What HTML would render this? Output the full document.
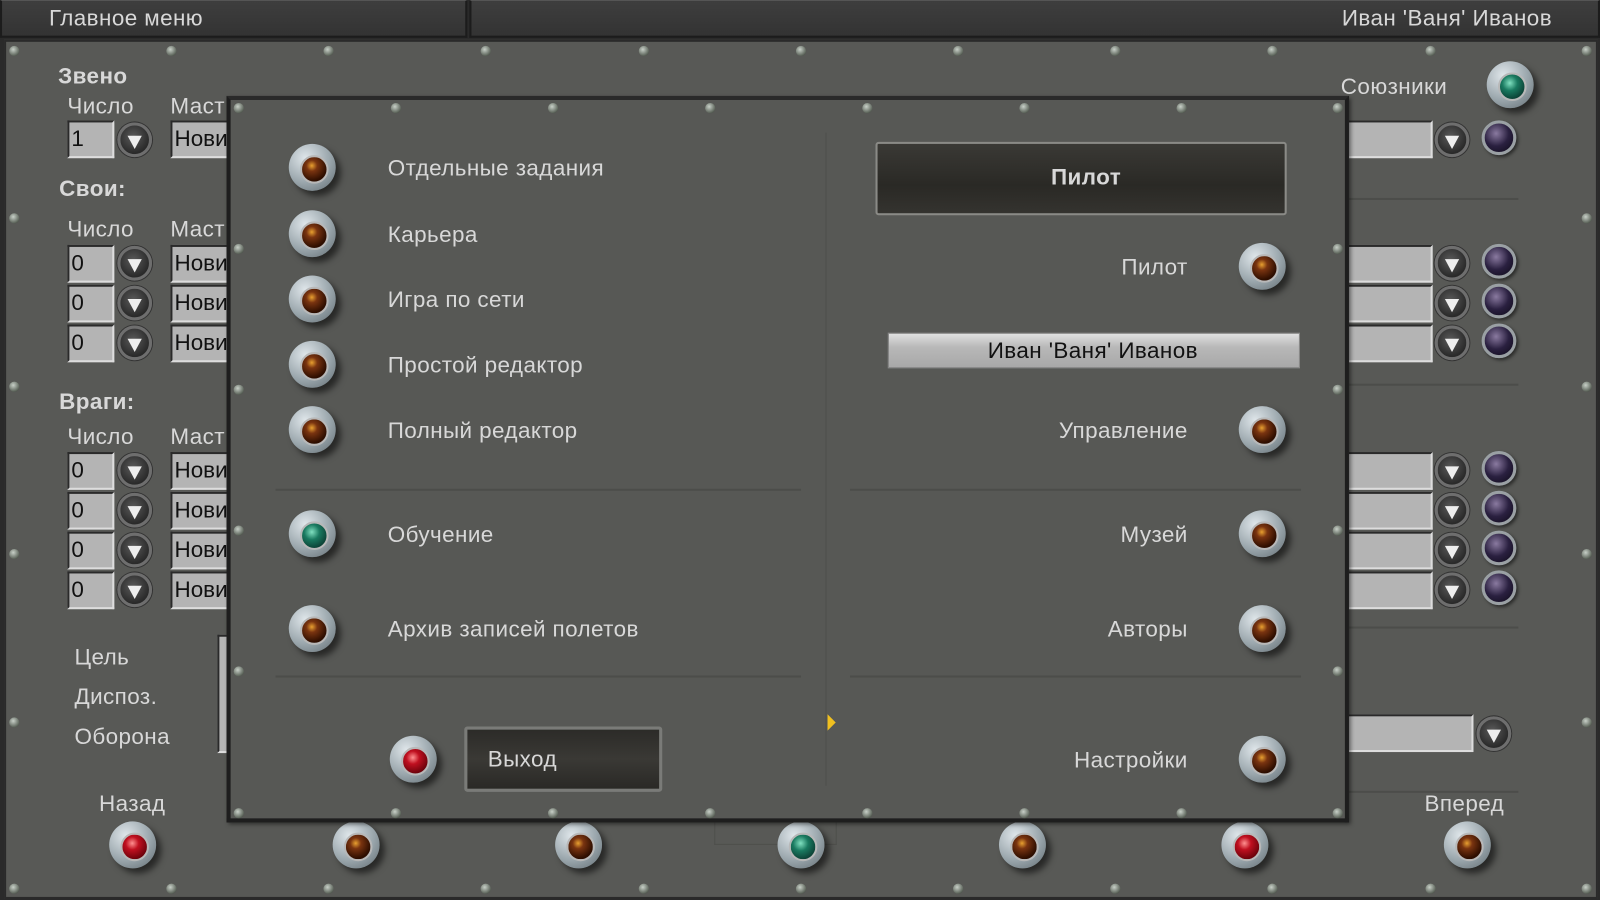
<!DOCTYPE html>
<html><head><meta charset="utf-8">
<style>
*{margin:0;padding:0;box-sizing:border-box}
html,body{width:1600px;height:900px;overflow:hidden;background:#2a2a2a}
#w{position:absolute;left:0;top:0;width:1568px;height:882px;transform:scale(1.0204);transform-origin:0 0;font-family:"Liberation Sans",sans-serif;}
.a{position:absolute}
.t{position:absolute;color:#d8d8d8;font-size:22px;letter-spacing:0.4px;white-space:nowrap;line-height:1}
.rt{position:absolute;right:404px;color:#d8d8d8;font-size:22px;letter-spacing:0.4px;white-space:nowrap;line-height:1}
.b{font-weight:bold}
.bar{position:absolute;top:0;height:37px;background:linear-gradient(#3e3e3e,#333);border:2px solid #1c1c1c;border-top:1px solid #555}
.inp{position:absolute;background:#b4b4b4;border:2px solid #2a2a2a;border-right-color:#ddd;border-bottom-color:#ddd;color:#111;font-size:22px;line-height:32px;padding-left:2px;overflow:hidden;height:37px}
.dd{position:absolute;width:34px;height:34px;border-radius:50%;background:radial-gradient(circle at 45% 40%,#5a5a5a,#2a2a2a 70%);border:3px solid #6e6e6e;box-shadow:0 0 0 1px #333}
.dd:after{content:"";position:absolute;left:7px;top:10px;border-left:7px solid transparent;border-right:7px solid transparent;border-top:13px solid #eee}
.k{position:absolute;width:46px;height:46px;margin:-23px 0 0 -23px;border-radius:50%;background:radial-gradient(circle at 35% 30%,#dfe6ea,#9aa6ac 55%,#5f6a70);box-shadow:5px 5px 6px rgba(0,0,0,.55)}
.k:after{content:"";position:absolute;left:11px;top:11px;width:24px;height:24px;border-radius:50%;border:2px solid #b8b8b8;background:radial-gradient(circle at 40% 35%,#e8a030 0,#7a3410 25%,#2e0e00 70%)}
.k.r:after{background:radial-gradient(circle at 40% 35%,#ff9090 0,#c01020 30%,#600008 80%)}
.k.g:after{background:radial-gradient(circle at 40% 35%,#80e0c0 0,#1a7a60 35%,#0a3a30 80%)}
.pk{position:absolute;width:34px;height:34px;margin:-17px 0 0 -17px;border-radius:50%;background:radial-gradient(circle at 40% 35%,#8a7aa0,#2a2040 50%,#0e0a18);border:3px solid #9aa0a4;box-shadow:2px 2px 3px rgba(0,0,0,.5)}
.s{position:absolute;width:10px;height:10px;margin:-5px 0 0 -5px;border-radius:50%;background:radial-gradient(circle at 40% 35%,#c8d0c8,#5a6258 70%,#222);}
.ln{position:absolute;background:#4c4d4a;height:2px}
</style></head><body><div id="w">
<div class="bar" style="left:0;width:458px"></div>
<div class="bar" style="left:460px;width:1108px"></div>
<div class="t" style="left:48px;top:7px">Главное меню</div>
<div class="t" style="right:47px;top:7px">Иван 'Ваня' Иванов</div>

<div class="a" style="left:4px;top:39px;width:1562px;height:842px;background:#585956;border:2px solid #2a2a2a"></div>
<div class="a" style="left:700px;top:806px;width:120px;height:22px;border:1px solid #4e4f4c;border-top:none"></div>

<div class="t b" style="left:57px;top:64px">Звено</div>
<div class="t" style="left:66px;top:93px">Число</div><div class="t" style="left:167px;top:93px">Маст</div>
<div class="inp" style="left:66px;top:118px;width:46px">1</div><div class="dd" style="left:115px;top:120px"></div>
<div class="inp" style="left:167px;top:118px;width:60px">Нови</div>
<div class="t b" style="left:58px;top:174px">Свои:</div>
<div class="t" style="left:66px;top:214px">Число</div><div class="t" style="left:167px;top:214px">Маст</div>
<div class="inp" style="left:66px;top:240px;width:46px">0</div><div class="dd" style="left:115px;top:241px"></div><div class="inp" style="left:167px;top:240px;width:60px">Нови</div>
<div class="inp" style="left:66px;top:279px;width:46px">0</div><div class="dd" style="left:115px;top:280px"></div><div class="inp" style="left:167px;top:279px;width:60px">Нови</div>
<div class="inp" style="left:66px;top:318px;width:46px">0</div><div class="dd" style="left:115px;top:319px"></div><div class="inp" style="left:167px;top:318px;width:60px">Нови</div>
<div class="t b" style="left:58px;top:383px">Враги:</div>
<div class="t" style="left:66px;top:417px">Число</div><div class="t" style="left:167px;top:417px">Маст</div>
<div class="inp" style="left:66px;top:443px;width:46px">0</div><div class="dd" style="left:115px;top:444px"></div><div class="inp" style="left:167px;top:443px;width:60px">Нови</div>
<div class="inp" style="left:66px;top:482px;width:46px">0</div><div class="dd" style="left:115px;top:483px"></div><div class="inp" style="left:167px;top:482px;width:60px">Нови</div>
<div class="inp" style="left:66px;top:521px;width:46px">0</div><div class="dd" style="left:115px;top:522px"></div><div class="inp" style="left:167px;top:521px;width:60px">Нови</div>
<div class="inp" style="left:66px;top:560px;width:46px">0</div><div class="dd" style="left:115px;top:561px"></div><div class="inp" style="left:167px;top:560px;width:60px">Нови</div>
<div class="t" style="left:73px;top:633px">Цель</div>
<div class="t" style="left:73px;top:672px">Диспоз.</div>
<div class="t" style="left:73px;top:711px">Оборона</div>
<div class="inp" style="left:213px;top:622px;width:20px;height:116px"></div>
<div class="t" style="left:97px;top:777px">Назад</div>
<div class="t" style="left:1396px;top:777px">Вперед</div>
<div class="t" style="left:1314px;top:74px">Союзники</div>
<div class="k g" style="left:1480px;top:83px"></div>

<div class="inp" style="left:1316px;top:118px;width:88px"></div><div class="dd" style="left:1406px;top:120px"></div><div class="pk" style="left:1469px;top:135px"></div>
<div class="inp" style="left:1316px;top:240px;width:88px"></div><div class="dd" style="left:1406px;top:241px"></div><div class="pk" style="left:1469px;top:256px"></div>
<div class="inp" style="left:1316px;top:279px;width:88px"></div><div class="dd" style="left:1406px;top:280px"></div><div class="pk" style="left:1469px;top:295px"></div>
<div class="inp" style="left:1316px;top:318px;width:88px"></div><div class="dd" style="left:1406px;top:319px"></div><div class="pk" style="left:1469px;top:334px"></div>
<div class="inp" style="left:1316px;top:443px;width:88px"></div><div class="dd" style="left:1406px;top:444px"></div><div class="pk" style="left:1469px;top:459px"></div>
<div class="inp" style="left:1316px;top:482px;width:88px"></div><div class="dd" style="left:1406px;top:483px"></div><div class="pk" style="left:1469px;top:498px"></div>
<div class="inp" style="left:1316px;top:521px;width:88px"></div><div class="dd" style="left:1406px;top:522px"></div><div class="pk" style="left:1469px;top:537px"></div>
<div class="inp" style="left:1316px;top:560px;width:88px"></div><div class="dd" style="left:1406px;top:561px"></div><div class="pk" style="left:1469px;top:576px"></div>
<div class="inp" style="left:1316px;top:700px;width:128px"></div><div class="dd" style="left:1447px;top:702px"></div>
<div class="ln" style="left:1322px;top:194px;width:166px"></div>
<div class="ln" style="left:1322px;top:376px;width:166px"></div>
<div class="ln" style="left:1322px;top:614px;width:166px"></div>
<div class="ln" style="left:1322px;top:775px;width:166px"></div>

<div class="k r" style="left:130px;top:828px"></div>
<div class="k" style="left:349px;top:828px"></div>
<div class="k" style="left:567px;top:828px"></div>
<div class="k g" style="left:785px;top:828px"></div>
<div class="k" style="left:1002px;top:828px"></div>
<div class="k r" style="left:1220px;top:828px"></div>
<div class="k" style="left:1438px;top:828px"></div>

<div class="s" style="left:14px;top:50px"></div><div class="s" style="left:168px;top:50px"></div><div class="s" style="left:322px;top:50px"></div><div class="s" style="left:476px;top:50px"></div><div class="s" style="left:631px;top:50px"></div><div class="s" style="left:785px;top:50px"></div><div class="s" style="left:939px;top:50px"></div><div class="s" style="left:1093px;top:50px"></div><div class="s" style="left:1247px;top:50px"></div><div class="s" style="left:1402px;top:50px"></div><div class="s" style="left:1555px;top:50px"></div>
<div class="s" style="left:14px;top:871px"></div><div class="s" style="left:168px;top:871px"></div><div class="s" style="left:322px;top:871px"></div><div class="s" style="left:476px;top:871px"></div><div class="s" style="left:631px;top:871px"></div><div class="s" style="left:785px;top:871px"></div><div class="s" style="left:939px;top:871px"></div><div class="s" style="left:1093px;top:871px"></div><div class="s" style="left:1247px;top:871px"></div><div class="s" style="left:1402px;top:871px"></div><div class="s" style="left:1555px;top:871px"></div>
<div class="s" style="left:14px;top:214px"></div><div class="s" style="left:14px;top:379px"></div><div class="s" style="left:14px;top:543px"></div><div class="s" style="left:14px;top:708px"></div>
<div class="s" style="left:1555px;top:214px"></div><div class="s" style="left:1555px;top:379px"></div><div class="s" style="left:1555px;top:543px"></div><div class="s" style="left:1555px;top:708px"></div>

<!-- dialog -->
<div class="a" style="left:222px;top:94px;width:1100px;height:712px;background:#575855;border:4px solid #1e1e1e;border-top-color:#2a2a2a;box-shadow:2px 2px 4px rgba(0,0,0,.5)"></div>
<div class="s" style="left:234px;top:106px"></div><div class="s" style="left:388px;top:106px"></div><div class="s" style="left:542px;top:106px"></div><div class="s" style="left:696px;top:106px"></div><div class="s" style="left:850px;top:106px"></div><div class="s" style="left:1004px;top:106px"></div><div class="s" style="left:1158px;top:106px"></div><div class="s" style="left:1311px;top:106px"></div>
<div class="s" style="left:234px;top:797px"></div><div class="s" style="left:388px;top:797px"></div><div class="s" style="left:542px;top:797px"></div><div class="s" style="left:696px;top:797px"></div><div class="s" style="left:850px;top:797px"></div><div class="s" style="left:1004px;top:797px"></div><div class="s" style="left:1158px;top:797px"></div><div class="s" style="left:1311px;top:797px"></div>
<div class="s" style="left:234px;top:244px"></div><div class="s" style="left:234px;top:382px"></div><div class="s" style="left:234px;top:520px"></div><div class="s" style="left:234px;top:658px"></div>
<div class="s" style="left:1311px;top:244px"></div><div class="s" style="left:1311px;top:382px"></div><div class="s" style="left:1311px;top:520px"></div><div class="s" style="left:1311px;top:658px"></div>
<div class="ln" style="left:270px;top:479px;width:515px"></div>
<div class="ln" style="left:833px;top:479px;width:442px"></div>
<div class="ln" style="left:270px;top:662px;width:515px"></div>
<div class="ln" style="left:833px;top:662px;width:442px"></div>
<div class="a" style="left:809px;top:130px;width:1px;height:640px;background:#4e4f4c"></div>

<div class="k" style="left:306px;top:164px"></div><div class="t" style="left:380px;top:154px">Отдельные задания</div>
<div class="k" style="left:306px;top:229px"></div><div class="t" style="left:380px;top:219px">Карьера</div>
<div class="k" style="left:306px;top:293px"></div><div class="t" style="left:380px;top:283px">Игра по сети</div>
<div class="k" style="left:306px;top:357px"></div><div class="t" style="left:380px;top:347px">Простой редактор</div>
<div class="k" style="left:306px;top:421px"></div><div class="t" style="left:380px;top:411px">Полный редактор</div>
<div class="k g" style="left:306px;top:523px"></div><div class="t" style="left:380px;top:513px">Обучение</div>
<div class="k" style="left:306px;top:616px"></div><div class="t" style="left:380px;top:606px">Архив записей полетов</div>
<div class="k r" style="left:405px;top:744px"></div>
<div class="a" style="left:455px;top:712px;width:194px;height:64px;background:linear-gradient(#2c2b28,#3a3935 50%,#2a2926);border:3px solid #7a7b78;border-radius:3px"></div>
<div class="t" style="left:478px;top:733px">Выход</div>

<div class="a" style="left:858px;top:139px;width:403px;height:72px;background:linear-gradient(#3a3935,#2a2925 60%,#34332f);border:2px solid #8a8a86;border-radius:3px"></div>
<div class="t b" style="left:1030px;top:163px">Пилот</div>
<div class="rt" style="top:251px">Пилот</div><div class="k" style="left:1237px;top:261px"></div>
<div class="a" style="left:870px;top:326px;width:404px;height:35px;background:linear-gradient(#e0e0e0,#b8b8b8 40%,#a8a8a8);border:1px solid #888"></div>
<div class="t" style="left:968px;top:333px;color:#111">Иван 'Ваня' Иванов</div>
<div class="rt" style="top:411px">Управление</div><div class="k" style="left:1237px;top:421px"></div>
<div class="rt" style="top:513px">Музей</div><div class="k" style="left:1237px;top:523px"></div>
<div class="rt" style="top:606px">Авторы</div><div class="k" style="left:1237px;top:616px"></div>
<div class="rt" style="top:734px">Настройки</div><div class="k" style="left:1237px;top:744px"></div>
<div class="a" style="left:811px;top:700px;border-left:8px solid #f0c020;border-top:8px solid transparent;border-bottom:8px solid transparent;width:0;height:0"></div>
</div></body></html>
